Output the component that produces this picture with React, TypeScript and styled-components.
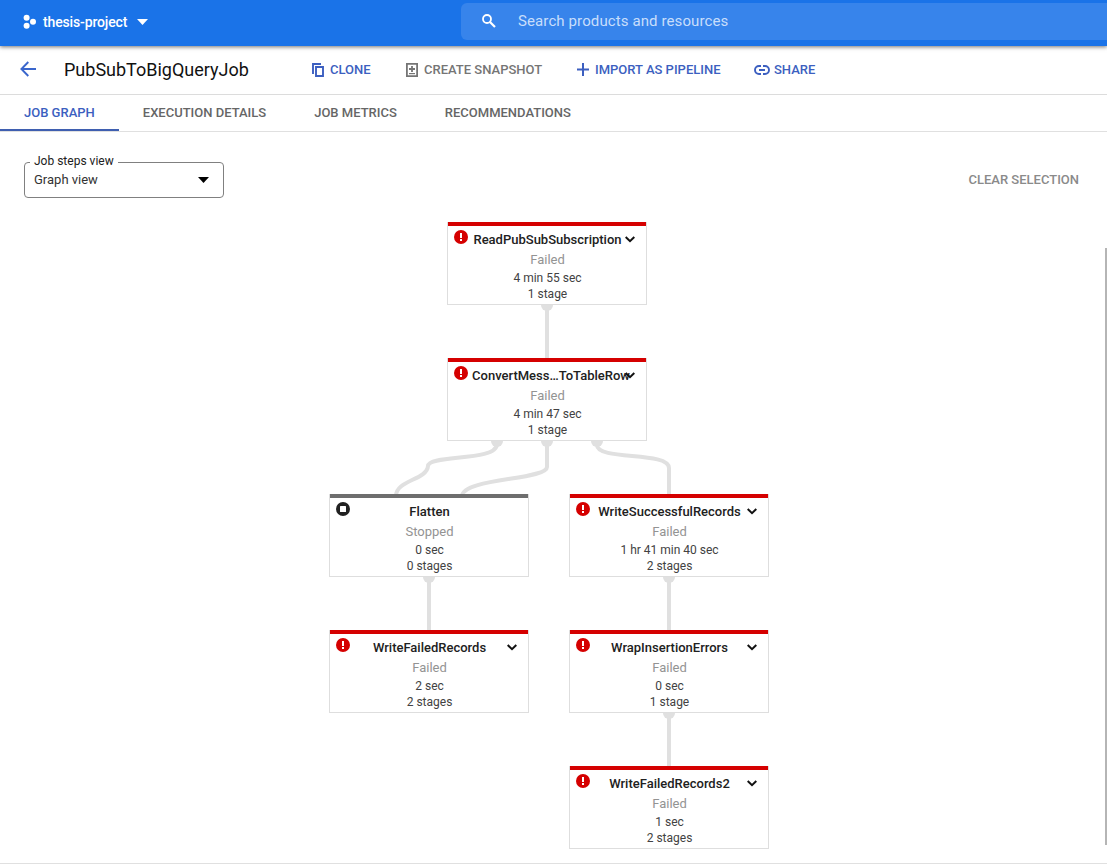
import React from "react";
import styled, { createGlobalStyle } from "styled-components";

const GlobalStyle = createGlobalStyle`
  * { box-sizing: border-box; }
  body { margin: 0; background: #fff; font-family: Roboto, "Liberation Sans", sans-serif; }
`;

const Page = styled.div`
  width: 1107px;
  height: 864px;
  display: flex;
  flex-direction: column;
  overflow: hidden;
  background: #fff;
`;

const Header = styled.header`
  flex: none;
  height: 46px;
  display: flex;
  align-items: flex-start;
  justify-content: space-between;
  padding-left: 22px;
  background: #1a73e8;
  box-shadow: 0 1px 4px rgba(0, 0, 0, 0.55);
  z-index: 1;
`;

const ProjectPicker = styled.div`
  height: 44px;
  display: flex;
  align-items: center;
  color: #fff;
  font-size: 14px;
  font-weight: 500;
  letter-spacing: -0.14px;
`;

const ProjectName = styled.span`
  margin: 0 10px 0 7px;
`;

const SearchBar = styled.div`
  width: 646px;
  height: 37px;
  margin-top: 3px;
  padding: 0 0 1px 20px;
  display: flex;
  align-items: center;
  gap: 21px;
  border-radius: 6px 0 0 6px;
  background: #3784eb;
  color: #c8defb;
  font-size: 15px;
  letter-spacing: 0.11px;
`;

const Toolbar = styled.div`
  flex: none;
  height: 49px;
  display: flex;
  align-items: center;
  padding: 0 0 1px 20px;
  border-bottom: 1px solid #dcdcdc;
`;

const BackIcon = styled.svg`
  margin-bottom: 2px;
`;

const Title = styled.h1`
  width: 248px;
  margin: 0 0 0 28px;
  font-size: 18px;
  font-weight: 400;
  color: #111;
  white-space: nowrap;
`;

const Action = styled.button<{ $width: number; $gap: number; $muted?: boolean }>`
  width: ${(p) => p.$width}px;
  display: flex;
  align-items: center;
  gap: ${(p) => p.$gap}px;
  padding: 0;
  border: 0;
  background: none;
  font: 500 13px/16px Roboto, sans-serif;
  color: ${(p) => (p.$muted ? "#757575" : "#3c5fc0")};
  white-space: nowrap;
`;

const PlusIcon = styled.svg`
  margin-bottom: 1px;
`;

const Tabs = styled.nav`
  flex: none;
  height: 37px;
  display: flex;
  border-bottom: 1px solid #e0e0e0;
`;

const Tab = styled.a<{ $active?: boolean }>`
  height: 36px;
  padding: 0 24px;
  font-size: 13px;
  font-weight: 500;
  line-height: 36px;
  color: ${(p) => (p.$active ? "#3c5fc0" : "#666")};
  box-shadow: ${(p) => (p.$active ? "inset 0 -2px #3f5fb0" : "none")};
`;

const Controls = styled.div`
  flex: none;
  height: 80px;
  padding: 30px 28px 0 24px;
  display: flex;
  justify-content: space-between;
`;

const Select = styled.div`
  position: relative;
  width: 200px;
  height: 36px;
  padding: 0 14px 1px 9px;
  display: flex;
  align-items: center;
  justify-content: space-between;
  border: 1px solid #808080;
  border-radius: 4px;
  font-size: 13px;
  color: #333;
`;

const SelectLabel = styled.span`
  position: absolute;
  top: -9px;
  left: 5px;
  padding: 0 4px;
  background: #fff;
  font-size: 12px;
  line-height: 14px;
  color: #212121;
`;

const ClearButton = styled.button`
  height: 36px;
  padding: 0 0 1px;
  border: 0;
  background: none;
  font: 500 13px Roboto, sans-serif;
  color: #8a8a8a;
`;

const Canvas = styled.main`
  position: relative;
  flex: none;
  height: 651px;
`;

const Edges = styled.svg`
  position: absolute;
  inset: 0;
  fill: none;
  stroke: #e0e0e0;
  stroke-width: 4;
`;

const Scrollbar = styled.div`
  position: absolute;
  right: 0;
  top: 36px;
  width: 2px;
  height: 597px;
  background: #b5b5b5;
`;

const Footer = styled.div`
  flex: none;
  height: 1px;
  background: #e0e0e0;
`;

const Node = styled.section<{ $x: number; $y: number }>`
  position: absolute;
  left: ${(p) => p.$x}px;
  top: ${(p) => p.$y}px;
  width: 200px;
  height: 83px;
  display: flex;
  flex-direction: column;
  border: solid #dedede;
  border-width: 0 1px 1px;
  background: #fff;
  font-size: 12px;
  line-height: 16px;
  text-align: center;
  white-space: nowrap;
  color: #424242;
`;

const StatusBar = styled.div<{ $failed: boolean }>`
  height: 4px;
  margin-bottom: 6px;
  background: ${(p) => (p.$failed ? "#d50000" : "#6e6e6e")};
`;

const NodeTitle = styled.div<{ $indent: number }>`
  padding-left: ${(p) => p.$indent}px;
  margin-bottom: 4px;
  font-size: 13px;
  font-weight: 500;
  color: #212121;
`;

const NodeStatus = styled.div`
  padding-left: 1px;
  margin-bottom: 2px;
  font-size: 13px;
  color: #939393;
`;

const NodeLine = styled.div`
  padding-left: 1px;
`;

const StatusIcon = styled.svg`
  position: absolute;
  left: 6px;
  top: 8px;
`;

const ExpandIcon = styled.svg`
  position: absolute;
  right: 11px;
  top: 14px;
`;

type Step = {
  name: string;
  x: number;
  y: number;
  time: string;
  stages: string;
  stopped?: boolean;
  indent?: number;
};

const steps: Step[] = [
  { name: "ReadPubSubSubscription", x: 447, y: 10, time: "4 min 55 sec", stages: "1 stage" },
  { name: "ConvertMess…ToTableRow", x: 447, y: 146, time: "4 min 47 sec", stages: "1 stage", indent: 8 },
  { name: "Flatten", x: 329, y: 282, time: "0 sec", stages: "0 stages", stopped: true },
  { name: "WriteSuccessfulRecords", x: 569, y: 282, time: "1 hr 41 min 40 sec", stages: "2 stages" },
  { name: "WriteFailedRecords", x: 329, y: 418, time: "2 sec", stages: "2 stages" },
  { name: "WrapInsertionErrors", x: 569, y: 418, time: "0 sec", stages: "1 stage" },
  { name: "WriteFailedRecords2", x: 569, y: 554, time: "1 sec", stages: "2 stages" },
];

const edges = [
  "M547 94V146",
  "M497 229V232C497 250 429 242 428 254C427 268 396 268 396 284",
  "M547 229V255C547 268 463 266 462 284",
  "M597 229V233C597 249 669 239 669 256V284",
  "M429 366V420",
  "M669 366V420",
  "M669 502V556",
];

const ports = [[547, 93], [497, 229], [547, 229], [597, 229], [429, 365], [669, 365], [669, 501]];

function StepNode({ step }: { step: Step }) {
  return (
    <Node $x={step.x} $y={step.y}>
      <StatusBar $failed={!step.stopped} />
      <NodeTitle $indent={step.indent ?? 1}>{step.name}</NodeTitle>
      <NodeStatus>{step.stopped ? "Stopped" : "Failed"}</NodeStatus>
      <NodeLine>{step.time}</NodeLine>
      <NodeLine>{step.stages}</NodeLine>
      <StatusIcon width="14" height="14" viewBox="0 0 14 14">
        <circle cx="7" cy="7" r="7" fill={step.stopped ? "#212121" : "#d50000"} />
        {step.stopped ? (
          <rect x="4" y="4" width="6" height="6" rx="0.5" fill="#fff" />
        ) : (
          <path d="M6 3h2v5H6zM6 9h2v2H6z" fill="#fff" />
        )}
      </StatusIcon>
      {!step.stopped && (
        <ExpandIcon width="10" height="7" viewBox="0 0 10 7">
          <path d="M.7 1 5 5.2 9.3 1" fill="none" stroke="#111" strokeWidth="2" />
        </ExpandIcon>
      )}
    </Node>
  );
}

export default function App() {
  return (
    <>
      <GlobalStyle />
      <Page>
        <Header>
          <ProjectPicker>
            <svg width="14" height="16" viewBox="0 0 14 16" fill="#fff">
              <circle cx="4.6" cy="3.7" r="3" />
              <circle cx="4.6" cy="11.8" r="3" />
              <circle cx="11" cy="7.8" r="3" />
            </svg>
            <ProjectName>thesis-project</ProjectName>
            <svg width="11" height="6" viewBox="0 0 11 6" fill="#fff"><path d="M0 0h11L5.5 6z" /></svg>
          </ProjectPicker>
          <SearchBar>
            <svg width="16" height="16" viewBox="0 0 16 16" fill="none" stroke="#fff">
              <circle cx="6" cy="6" r="4" strokeWidth="1.8" />
              <path d="M9 9l5 5" strokeWidth="2.2" />
            </svg>
            <span>Search products and resources</span>
          </SearchBar>
        </Header>

        <Toolbar>
          <BackIcon width="16" height="16" viewBox="0 0 16 16" fill="none" stroke="#3a66cc" strokeWidth="1.9">
            <path d="M16 8H1.8M8.3 1 1.4 8l6.9 7" />
          </BackIcon>
          <Title>PubSubToBigQueryJob</Title>
          <Action $width={94} $gap={6}>
            <svg width="12" height="14" viewBox="0 0 12 14" fill="none" stroke="currentColor" strokeWidth="1.9">
              <path d="M1 11V1H9M4 4h7v9H4z" />
            </svg>
            CLONE
          </Action>
          <Action $width={171} $gap={6} $muted>
            <svg width="12" height="14" viewBox="0 0 12 14" fill="none" stroke="currentColor" strokeWidth="1.8">
              <path d="M.9.9h10.2v12.2H.9zM6 3v6M3 6h6" />
              <path d="M3 10.6h6" strokeWidth="1.2" />
            </svg>
            CREATE SNAPSHOT
          </Action>
          <Action $width={177} $gap={6}>
            <PlusIcon width="12" height="13" viewBox="0 0 12 13" fill="none" stroke="currentColor" strokeWidth="2">
              <path d="M6 0v13M0 6.5h12" />
            </PlusIcon>
            IMPORT AS PIPELINE
          </Action>
          <Action $width={70} $gap={4}>
            <svg width="16" height="10" viewBox="0 0 16 10" fill="none" stroke="currentColor" strokeWidth="1.9">
              <path d="M7 1H5a4 4 0 0 0 0 8h2M9 1h2a4 4 0 0 1 0 8H9M5 5h6" />
            </svg>
            SHARE
          </Action>
        </Toolbar>

        <Tabs>
          <Tab $active>JOB GRAPH</Tab>
          <Tab>EXECUTION DETAILS</Tab>
          <Tab>JOB METRICS</Tab>
          <Tab>RECOMMENDATIONS</Tab>
        </Tabs>

        <Controls>
          <Select>
            <SelectLabel>Job steps view</SelectLabel>
            Graph view
            <svg width="11" height="6" viewBox="0 0 11 6"><path d="M0 0h11L5.5 6z" /></svg>
          </Select>
          <ClearButton>CLEAR SELECTION</ClearButton>
        </Controls>

        <Canvas>
          <Edges width="1107" height="651" viewBox="0 0 1107 651">
            {edges.map((d) => <path key={d} d={d} />)}
            {ports.map(([x, y]) => <circle key={`${x}-${y}`} cx={x} cy={y} r="6" fill="#e0e0e0" stroke="none" />)}
          </Edges>
          {steps.map((step) => <StepNode key={step.name} step={step} />)}
          <Scrollbar />
        </Canvas>
        <Footer />
      </Page>
    </>
  );
}
